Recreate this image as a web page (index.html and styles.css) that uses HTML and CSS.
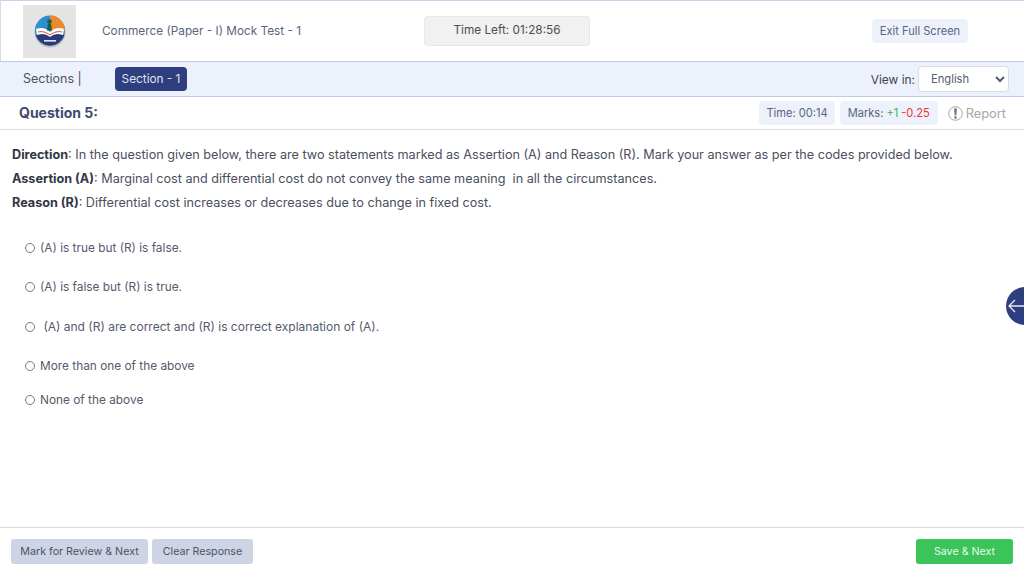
FILE: index.html
```html
<!DOCTYPE html>
<html lang="en">
<head>
<meta charset="utf-8">
<title>Mock Test</title>
<link rel="stylesheet" href="styles.css">
</head>
<body>
<div class="page">
  <header class="top">
    <div class="logo">
      <svg width="36" height="36" viewBox="0 0 36 36">
        <circle cx="18" cy="19" r="15.500" fill="#7f84a0" opacity=".4"/>
        <circle cx="18" cy="17.500" r="15" fill="#2f8fce"/>
        <path d="M18 2.500A15 15 0 0 1 33 17.500H18Z" fill="#ee8a2c"/>
        <path d="M3.600 22A15 15 0 0 0 32.400 22L18 20Z" fill="#2b3a78"/>
        <path d="M4 16c5-2 10-1 14 3 4-4 9-5 14-3l-1 6c-5-2-9-1-13 2-4-3-8-4-13-2Z" fill="#fff"/>
        <path d="M6 19c4-1 8 0 12 3 4-3 8-4 12-3" fill="none" stroke="#d8433a" stroke-width="1"/>
        <circle cx="17.500" cy="8.500" r="2.300" fill="#1f5f4a"/>
        <path d="M16 10.500h3l1 7h-5Z" fill="#1f5f4a"/>
        <rect x="12" y="27" width="12" height="1.600" fill="#dfe4f2"/>
      </svg>
    </div>
    <div class="title">Commerce (Paper - I) Mock Test - 1</div>
    <div class="timer">Time Left: 01:28:56</div>
    <button class="exit" type="button">Exit Full Screen</button>
  </header>

  <nav class="sections">
    <span class="sections-label">Sections |</span>
    <span class="section-pill">Section - 1</span>
    <label class="view">View in:
      <select class="lang"><option>English</option></select>
    </label>
  </nav>

  <div class="qbar">
    <h2 class="qnum">Question 5:</h2>
    <span class="chip chip-time">Time: 00:14</span>
    <span class="chip">Marks: <span class="plus">+1</span> <span class="minus">-0.25</span></span>
    <span class="report">
      <svg width="15" height="15" viewBox="0 0 15 15">
        <circle cx="7.500" cy="7.500" r="6.800" fill="none" stroke="#a8a8a8" stroke-width="1"/>
        <path d="M6 2.500h3L8.300 9.500H6.700Z" fill="#777"/>
        <circle cx="7.500" cy="11.500" r="1.300" fill="#777"/>
      </svg>
      Report
    </span>
  </div>

  <main class="content">
    <p class="line"><b>Direction</b>: In the question given below, there are two statements marked as Assertion (A) and Reason (R). Mark your answer as per the codes provided below.</p>
    <p class="line"><b>Assertion (A)</b>: Marginal cost and differential cost do not convey the same meaning&nbsp; in all the circumstances.</p>
    <p class="line"><b>Reason (R)</b>: Differential cost increases or decreases due to change in fixed cost.</p>
    <div class="options">
      <label class="opt"><input type="radio" name="a"><span>(A) is true but (R) is false.</span></label>
      <label class="opt"><input type="radio" name="a"><span>(A) is false but (R) is true.</span></label>
      <label class="opt"><input type="radio" name="a"><span class="wide">&nbsp;(A) and (R) are correct and (R) is correct explanation of (A).</span></label>
      <label class="opt"><input type="radio" name="a"><span>More than one of the above</span></label>
      <label class="opt short"><input type="radio" name="a"><span>None of the above</span></label>
    </div>
    <div class="drawer">
      <svg width="18" height="14" viewBox="0 0 18 14"><path d="M7 1 1 7l6 6M1 7h17" fill="none" stroke="#e8eaf4" stroke-width="1.300"/></svg>
    </div>
  </main>

  <footer class="foot">
    <button class="btn grey" type="button">Mark for Review &amp; Next</button>
    <button class="btn grey" type="button">Clear Response</button>
    <button class="btn green" type="button">Save &amp; Next</button>
  </footer>
</div>
</body>
</html>
```
FILE: styles.css
```css
* { box-sizing: border-box; }
html, body { margin: 0; height: 100%; overflow: hidden; }
body { font-family: Inter, "Open Sans", sans-serif; color: #4a5068; background: #fff; }
.page { width: 1024px; height: 575px; display: flex; flex-direction: column; }

.top { height: 61px; flex: none; display: flex; align-items: center; border-top: 1px solid #c9d2e8; border-left: 1px solid #d5dcee; padding-left: 22px; }
.logo { width: 53px; height: 53px; background: #e4e4e4; display: flex; align-items: center; justify-content: center; flex: none; }
.title { width: 348px; padding-left: 26px; font-size: 11.800px; color: #5a6480; flex: none; }
.timer { width: 166px; height: 30px; padding-bottom: 2px; background: #f1f1f1; border: 1px solid #e8e8e8; border-radius: 3px; display: flex; align-items: center; justify-content: center; font-size: 11.800px; color: #4d4d4d; flex: none; }
.exit { margin-left: 282px; width: 96px; height: 24px; padding: 0; border: 0; border-radius: 4px; background: #edf1fb; color: #5a6480; font: inherit; font-size: 11.100px; }

.sections { height: 36px; flex: none; display: flex; align-items: center; background: #edf1fb; border-top: 1px solid #bfcbe6; border-bottom: 1px solid #bfcbe6; padding: 0 15px 0 23px; }
.sections-label { font-size: 12.500px; color: #4d5265; width: 92px; flex: none; padding-bottom: 2px; }
.section-pill { width: 72px; height: 24px; background: #2f3e7e; color: #dfe4f2; border-radius: 4px; font-size: 11.800px; display: flex; align-items: center; justify-content: center; }
.view { margin-left: auto; display: flex; align-items: center; gap: 3px; font-size: 11.900px; color: #3f4454; }
.lang { width: 91px; height: 26px; background: #fff; border: 1px solid #d6dbe8; border-radius: 4px; font: inherit; font-size: 11.200px; color: #555b70; padding-left: 8px; }

.qbar { height: 33px; flex: none; display: flex; align-items: center; gap: 5px; border-bottom: 1px solid #d6dbe8; padding: 0 18px 0 19px; }
.qnum { margin: 0 auto 2px 0; font-size: 14px; font-weight: 700; color: #3f4a70; }
.chip { height: 24px; padding: 0 8px; background: #edf1fb; border-radius: 4px; display: flex; align-items: center; gap: 3px; font-size: 11.100px; color: #5a6480; }
.chip-time { padding: 0 7px; }
.plus { color: #34b84a; }
.minus { color: #f0303a; }
.report { display: flex; align-items: center; gap: 3px; margin-left: 5px; font-size: 12.800px; color: #a6a6a6; }

.content { flex: 1; position: relative; padding: 13px 12px 0; }
.line { margin: 0; height: 24px; line-height: 24px; font-size: 12.650px; color: #4a4f5e; white-space: nowrap; }
.line b { color: #333745; font-weight: 700; }
.options { margin-top: 13px; }
.opt { display: flex; align-items: center; gap: 5px; height: 39.500px; font-size: 11.850px; color: #555a6c; padding-left: 13px; }
.opt .wide { font-size: 12px; }
.opt.short { height: 27px; }
.opt input { appearance: none; margin: 0; width: 10px; height: 10px; flex: none; border: 1px solid #77797f; border-radius: 50%; background: #fff; }
.drawer { position: absolute; left: 1006px; top: 157px; width: 38px; height: 38px; border-radius: 50%; background: #2f3e7e; display: flex; align-items: center; padding-left: 2px; }

.foot { height: 48px; flex: none; display: flex; align-items: center; gap: 4px; border-top: 1px solid #d6dbe8; padding: 0 11px; }
.btn { height: 25px; padding: 0; border: 0; border-radius: 3px; font: inherit; font-size: 10.700px; }
.grey { background: #ced4e4; color: #4a5272; }
.grey:nth-child(1) { width: 137px; }
.grey:nth-child(2) { width: 101px; }
.green { width: 97px; margin-left: auto; background: #3bc45a; color: #e9f9ec; }
```
